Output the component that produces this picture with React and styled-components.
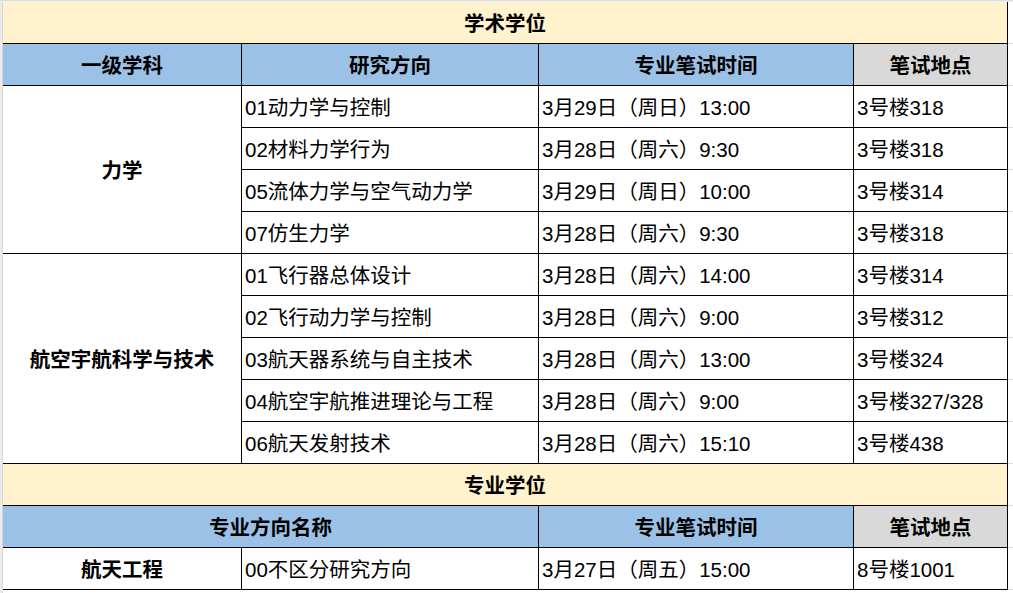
import React from "react";
import styled, { createGlobalStyle } from "styled-components";

const GlobalStyle = createGlobalStyle`
  html, body { margin: 0; padding: 0; background: #fff; }
  body {
    font-family: "Liberation Sans", "Noto Sans CJK SC", sans-serif;
    color: #000;
  }
`;

const Sheet = styled.div`
  width: 1013px;
  height: 593px;
  box-sizing: border-box;
  padding: 2px 0 0 3px;
  overflow: hidden;
  background-color: #fff;
  background-image:
    linear-gradient(to bottom, #dedede 0 1px, #efefef 1px 2px, transparent 2px),
    linear-gradient(to right, #ececec 0 2px, #d6d6d6 2px 3px, transparent 3px),
    repeating-linear-gradient(to bottom, transparent 0 41px, #dcdcdc 41px 42px);
  background-position: 0 0, 0 0, 0 2px;
`;

const Grid = styled.div`
  display: grid;
  grid-template-columns: 239px 297px 315px 154px;
  grid-auto-rows: 42px;
  width: 1005px;
`;

const Cell = styled.div`
  box-sizing: border-box;
  display: flex;
  align-items: center;
  justify-content: ${(p) => (p.$center ? "center" : "flex-start")};
  padding: 3px ${(p) => (p.$center ? 0 : 3)}px 0 ${(p) => (p.$center ? 0 : 3)}px;
  grid-column: ${(p) => (p.$col ? `${p.$col} / span ${p.$cols || 1}` : `span ${p.$cols || 1}`)};
  grid-row: span ${(p) => p.$rows || 1};
  border-right: 1px solid #000;
  border-bottom: 1px solid #000;
  background: ${(p) => p.$bg || "#fff"};
  font-size: 20.5px;
  line-height: 24px;
  font-weight: ${(p) => (p.$bold ? 700 : 400)};
  white-space: nowrap;
`;

const TITLE = "#FFF2CC";
const BLUE = "#9BC2E6";
const GRAY = "#D9D9D9";

const academic = [
  {
    subject: "力学",
    rows: [
      ["01动力学与控制", "3月29日（周日）13:00", "3号楼318"],
      ["02材料力学行为", "3月28日（周六）9:30", "3号楼318"],
      ["05流体力学与空气动力学", "3月29日（周日）10:00", "3号楼314"],
      ["07仿生力学", "3月28日（周六）9:30", "3号楼318"],
    ],
  },
  {
    subject: "航空宇航科学与技术",
    rows: [
      ["01飞行器总体设计", "3月28日（周六）14:00", "3号楼314"],
      ["02飞行动力学与控制", "3月28日（周六）9:00", "3号楼312"],
      ["03航天器系统与自主技术", "3月28日（周六）13:00", "3号楼324"],
      ["04航空宇航推进理论与工程", "3月28日（周六）9:00", "3号楼327/328"],
      ["06航天发射技术", "3月28日（周六）15:10", "3号楼438"],
    ],
  },
];

export default function App() {
  return (
    <>
      <GlobalStyle />
      <Sheet>
        <Grid>
          <Cell $cols={4} $bg={TITLE} $bold $center>学术学位</Cell>
          <Cell $bg={BLUE} $bold $center>一级学科</Cell>
          <Cell $bg={BLUE} $bold $center>研究方向</Cell>
          <Cell $bg={BLUE} $bold $center>专业笔试时间</Cell>
          <Cell $bg={GRAY} $bold $center>笔试地点</Cell>
          {academic.map((g) => (
            <React.Fragment key={g.subject}>
              <Cell $rows={g.rows.length} $bold $center>
                {g.subject}
              </Cell>
              {g.rows.map((r, i) => (
                <React.Fragment key={i}>
                  <Cell $col={2}>{r[0]}</Cell>
                  <Cell>{r[1]}</Cell>
                  <Cell>{r[2]}</Cell>
                </React.Fragment>
              ))}
            </React.Fragment>
          ))}
          <Cell $cols={4} $bg={TITLE} $bold $center>专业学位</Cell>
          <Cell $cols={2} $bg={BLUE} $bold $center>专业方向名称</Cell>
          <Cell $bg={BLUE} $bold $center>专业笔试时间</Cell>
          <Cell $bg={GRAY} $bold $center>笔试地点</Cell>
          <Cell $bold $center>航天工程</Cell>
          <Cell>00不区分研究方向</Cell>
          <Cell>3月27日（周五）15:00</Cell>
          <Cell>8号楼1001</Cell>
        </Grid>
      </Sheet>
    </>
  );
}
